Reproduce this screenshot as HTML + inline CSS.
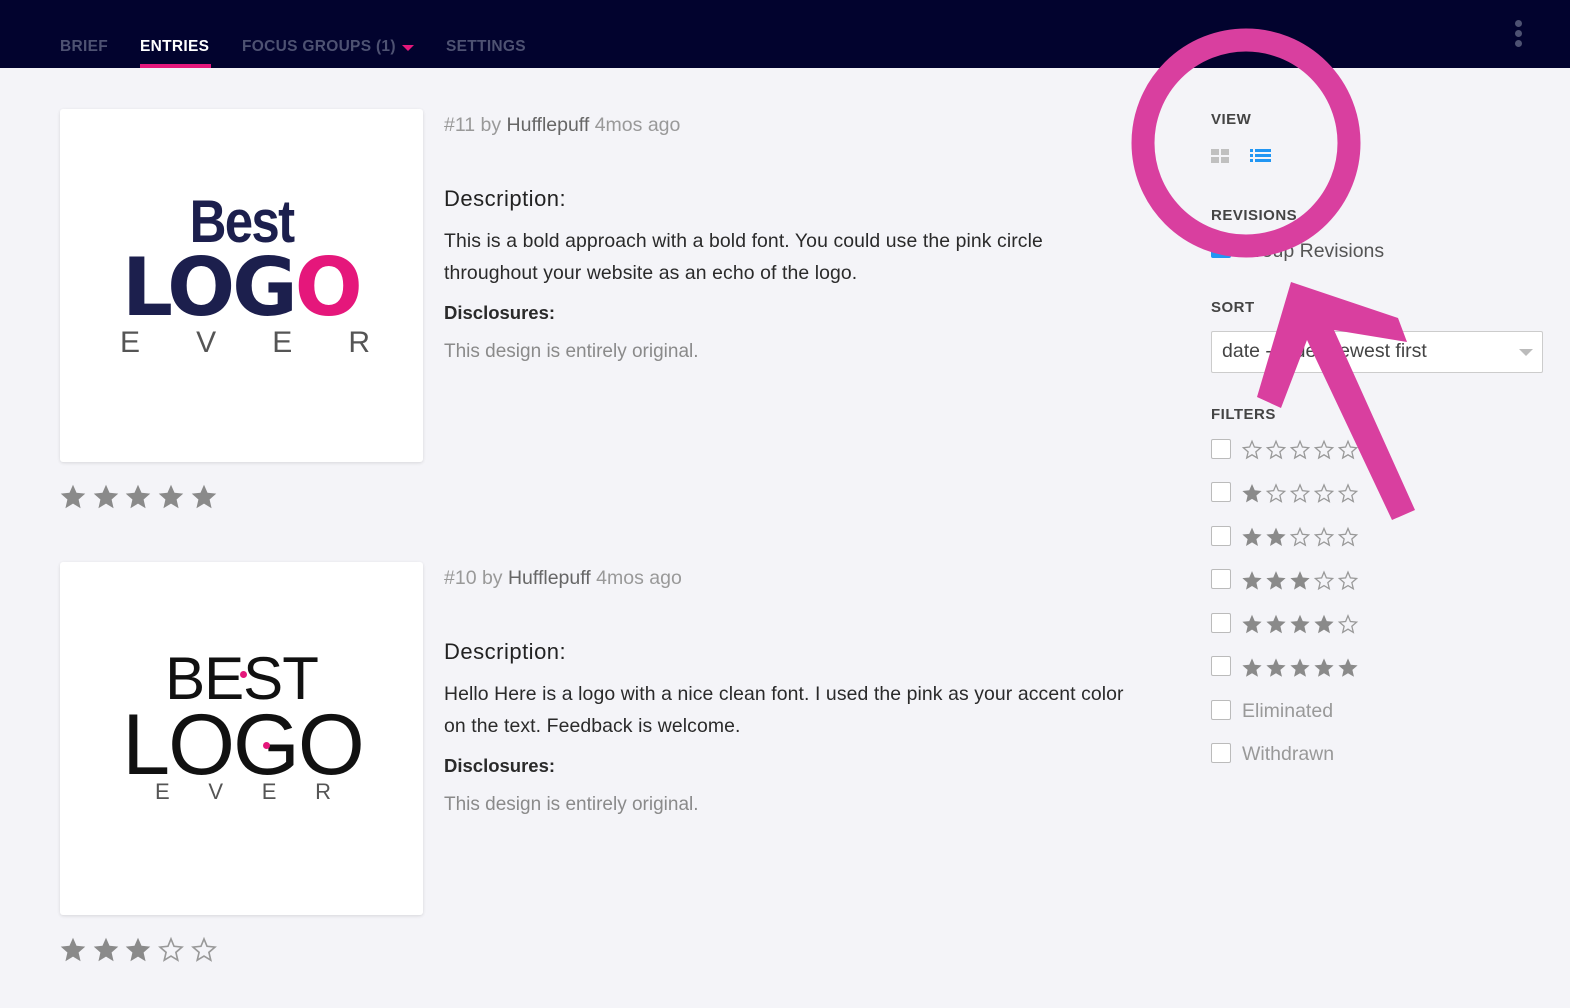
<!DOCTYPE html>
<html><head><meta charset="utf-8">
<style>
*{margin:0;padding:0;box-sizing:border-box}
body{width:1570px;height:1008px;background:#f4f4f8;font-family:"Liberation Sans",sans-serif;position:relative;overflow:hidden;color:#2a2a2a}
.nav{position:absolute;left:0;top:0;width:1570px;height:68px;background:#02032e}
.nav span{position:absolute;top:38px;font-size:15.5px;font-weight:bold;color:#4e5272;letter-spacing:.3px}
.a{position:absolute}
.card{position:absolute;left:60px;width:363px;height:353px;background:#fff;border-radius:3px;box-shadow:0 1px 3px rgba(0,0,0,.12)}
.meta{font-size:19.5px;color:#999}
.meta b{font-weight:normal;color:#666}
.h{font-size:22px;color:#222;letter-spacing:.5px}
.p{font-size:19.4px;color:#2a2a2a;line-height:32px;letter-spacing:.1px}
.d{font-size:18.5px;font-weight:bold;color:#2a2a2a}
.o{font-size:19px;color:#8a8a8a}
.lbl{font-size:15px;font-weight:bold;color:#444;letter-spacing:.5px}
.cb{position:absolute;left:1211px;width:20px;height:20px;border:1.5px solid #bbb;background:#fff;border-radius:2px}
.ft{position:absolute;left:1242px;font-size:19.5px;color:#999}
</style></head><body>
<svg width="0" height="0" style="position:absolute"><defs>
<symbol id="sf" viewBox="0 0 24 24"><polygon points="12,1.5 15,8.4 22.5,9.1 16.8,14.1 18.5,21.6 12,17.7 5.5,21.6 7.2,14.1 1.5,9.1 9,8.4" fill="#8a8a8a"/></symbol>
<symbol id="se" viewBox="0 0 24 24"><polygon points="12,2.5 14.6,8.8 21.4,9.5 16.2,14 17.8,20.7 12,17.2 6.2,20.7 7.8,14 2.6,9.5 9.4,8.8" fill="none" stroke="#999" stroke-width="1.4"/></symbol>
</defs></svg>

<div class="nav">
<span style="left:60px">BRIEF</span>
<span style="left:140px;color:#fff">ENTRIES</span>
<div class="a" style="left:140px;top:64px;width:71px;height:4px;background:#e5177b"></div>
<span style="left:242px">FOCUS GROUPS (1)</span>
<div class="a" style="left:402px;top:45px;width:0;height:0;border-left:6px solid transparent;border-right:6px solid transparent;border-top:6px solid #e5177b"></div>
<span style="left:446px">SETTINGS</span>
<div class="a" style="left:1515px;top:20px;width:7px;height:7px;border-radius:50%;background:#4e5272"></div>
<div class="a" style="left:1515px;top:30px;width:7px;height:7px;border-radius:50%;background:#4e5272"></div>
<div class="a" style="left:1515px;top:40px;width:7px;height:7px;border-radius:50%;background:#4e5272"></div>
</div>

<!-- entry 1 -->
<div class="card" style="top:109px">
 <div class="a" style="left:0;width:363px;top:78px;text-align:center;font-weight:bold;font-size:60px;color:#1c1f4d;letter-spacing:-2px;transform:scaleX(.85)">Best</div>
 <div class="a" style="left:62px;top:132px;width:250px;font-size:80px;color:#1c1f4d;letter-spacing:-3px;font-family:'DejaVu Sans','Liberation Sans',sans-serif;font-weight:bold;white-space:nowrap">LOG<span style="color:#e5177b">O</span></div>
 <div class="a" style="left:60px;top:217px;width:250px;display:flex;justify-content:space-between;font-size:30px;color:#555"><span>E</span><span>V</span><span>E</span><span>R</span></div>
</div>
<div class="a" style="left:59px;top:483px;display:flex;gap:4.7px">
<svg width="28" height="28"><use href="#sf"/></svg><svg width="28" height="28"><use href="#sf"/></svg><svg width="28" height="28"><use href="#sf"/></svg><svg width="28" height="28"><use href="#sf"/></svg><svg width="28" height="28"><use href="#sf"/></svg></div>

<div class="a meta" style="left:444px;top:114px">#11 by <b>Hufflepuff</b> 4mos ago</div>
<div class="a h" style="left:444px;top:186px">Description:</div>
<div class="a p" style="left:444px;top:225px">This is a bold approach with a bold font. You could use the pink circle<br>throughout your website as an echo of the logo.</div>
<div class="a d" style="left:444px;top:302px">Disclosures:</div>
<div class="a o" style="left:444px;top:341px">This design is entirely original.</div>

<!-- entry 2 -->
<div class="card" style="top:562px">
 <div class="a" style="left:0;width:363px;top:82px;text-align:center;font-size:60px;color:#111;letter-spacing:-1px">BEST</div>
 <div class="a" style="left:180px;top:109px;width:7px;height:7px;border-radius:50%;background:#e5177b"></div>
 <div class="a" style="left:-4px;width:373px;top:134px;text-align:center;font-size:86px;color:#111;letter-spacing:-2px;font-weight:300">LOGO</div>
 <div class="a" style="left:203px;top:180px;width:7px;height:7px;border-radius:50%;background:#e5177b"></div>
 <div class="a" style="left:95px;top:217px;width:176px;display:flex;justify-content:space-between;font-size:22px;color:#555"><span>E</span><span>V</span><span>E</span><span>R</span></div>
</div>
<div class="a" style="left:59px;top:936px;display:flex;gap:4.7px">
<svg width="28" height="28"><use href="#sf"/></svg><svg width="28" height="28"><use href="#sf"/></svg><svg width="28" height="28"><use href="#sf"/></svg><svg width="28" height="28"><use href="#se"/></svg><svg width="28" height="28"><use href="#se"/></svg></div>

<div class="a meta" style="left:444px;top:567px">#10 by <b>Hufflepuff</b> 4mos ago</div>
<div class="a h" style="left:444px;top:639px">Description:</div>
<div class="a p" style="left:444px;top:678px">Hello Here is a logo with a nice clean font. I used the pink as your accent color<br>on the text. Feedback is welcome.</div>
<div class="a d" style="left:444px;top:755px">Disclosures:</div>
<div class="a o" style="left:444px;top:794px">This design is entirely original.</div>

<!-- sidebar -->
<div class="a lbl" style="left:1211px;top:111px">VIEW</div>
<div class="a" style="left:1211px;top:149px;width:8px;height:6px;background:#c0c0c0"></div>
<div class="a" style="left:1221px;top:149px;width:8px;height:6px;background:#c0c0c0"></div>
<div class="a" style="left:1211px;top:157px;width:8px;height:6px;background:#c0c0c0"></div>
<div class="a" style="left:1221px;top:157px;width:8px;height:6px;background:#c0c0c0"></div>
<svg class="a" style="left:1250px;top:148px" width="22" height="18"><g fill="#2196f3"><rect x="0" y="1" width="3" height="3"/><rect x="5" y="1" width="16" height="3"/><rect x="0" y="6" width="3" height="3"/><rect x="5" y="6" width="16" height="3"/><rect x="0" y="11" width="3" height="3"/><rect x="5" y="11" width="16" height="3"/></g></svg>
<div class="a lbl" style="left:1211px;top:207px">REVISIONS</div>
<div class="a" style="left:1211px;top:243px;width:20px;height:15px;background:#2196f3;border-radius:2px"></div>
<div class="a" style="left:1240px;top:240px;font-size:19.5px;color:#555">Group Revisions</div>
<div class="a lbl" style="left:1211px;top:299px">SORT</div>
<div class="a" style="left:1211px;top:331px;width:332px;height:42px;background:#fff;border:1px solid #ccc;border-radius:2px"></div>
<div class="a" style="left:1222px;top:340px;font-size:19.5px;color:#444">date - order newest first</div>
<div class="a" style="left:1519px;top:349px;border-left:7px solid transparent;border-right:7px solid transparent;border-top:7px solid #bbb"></div>
<div class="a lbl" style="left:1211px;top:406px">FILTERS</div>

<div class="cb" style="top:439px"></div>
<div class="cb" style="top:482px"></div>
<div class="cb" style="top:526px"></div>
<div class="cb" style="top:569px"></div>
<div class="cb" style="top:613px"></div>
<div class="cb" style="top:656px"></div>
<div class="cb" style="top:700px"></div>
<div class="cb" style="top:743px"></div>
<svg class="a" style="left:1241px;top:439px" width="125" height="242">
 <g><use href="#se" x="0" y="0" width="22" height="22"/><use href="#se" x="24" y="0" width="22" height="22"/><use href="#se" x="48" y="0" width="22" height="22"/><use href="#se" x="72" y="0" width="22" height="22"/><use href="#se" x="96" y="0" width="22" height="22"/></g>
 <g transform="translate(0,43.6)"><use href="#sf" x="0" width="22" height="22"/><use href="#se" x="24" width="22" height="22"/><use href="#se" x="48" width="22" height="22"/><use href="#se" x="72" width="22" height="22"/><use href="#se" x="96" width="22" height="22"/></g>
 <g transform="translate(0,87.2)"><use href="#sf" x="0" width="22" height="22"/><use href="#sf" x="24" width="22" height="22"/><use href="#se" x="48" width="22" height="22"/><use href="#se" x="72" width="22" height="22"/><use href="#se" x="96" width="22" height="22"/></g>
 <g transform="translate(0,130.8)"><use href="#sf" x="0" width="22" height="22"/><use href="#sf" x="24" width="22" height="22"/><use href="#sf" x="48" width="22" height="22"/><use href="#se" x="72" width="22" height="22"/><use href="#se" x="96" width="22" height="22"/></g>
 <g transform="translate(0,174.4)"><use href="#sf" x="0" width="22" height="22"/><use href="#sf" x="24" width="22" height="22"/><use href="#sf" x="48" width="22" height="22"/><use href="#sf" x="72" width="22" height="22"/><use href="#se" x="96" width="22" height="22"/></g>
 <g transform="translate(0,218)"><use href="#sf" x="0" width="22" height="22"/><use href="#sf" x="24" width="22" height="22"/><use href="#sf" x="48" width="22" height="22"/><use href="#sf" x="72" width="22" height="22"/><use href="#sf" x="96" width="22" height="22"/></g>
</svg>
<div class="ft" style="top:700px">Eliminated</div>
<div class="ft" style="top:743px">Withdrawn</div>

<!-- annotation -->
<svg class="a" style="left:0;top:0" width="1570" height="1008">
 <ellipse cx="1246" cy="143" rx="103" ry="103" fill="none" stroke="#d93f9f" stroke-width="23"/>
 <polygon points="1291,282 1398,318 1407,342 1334,330 1415,510 1392,520 1307,340 1281,408 1257,397" fill="#d93f9f"/>
</svg>
</body></html>
